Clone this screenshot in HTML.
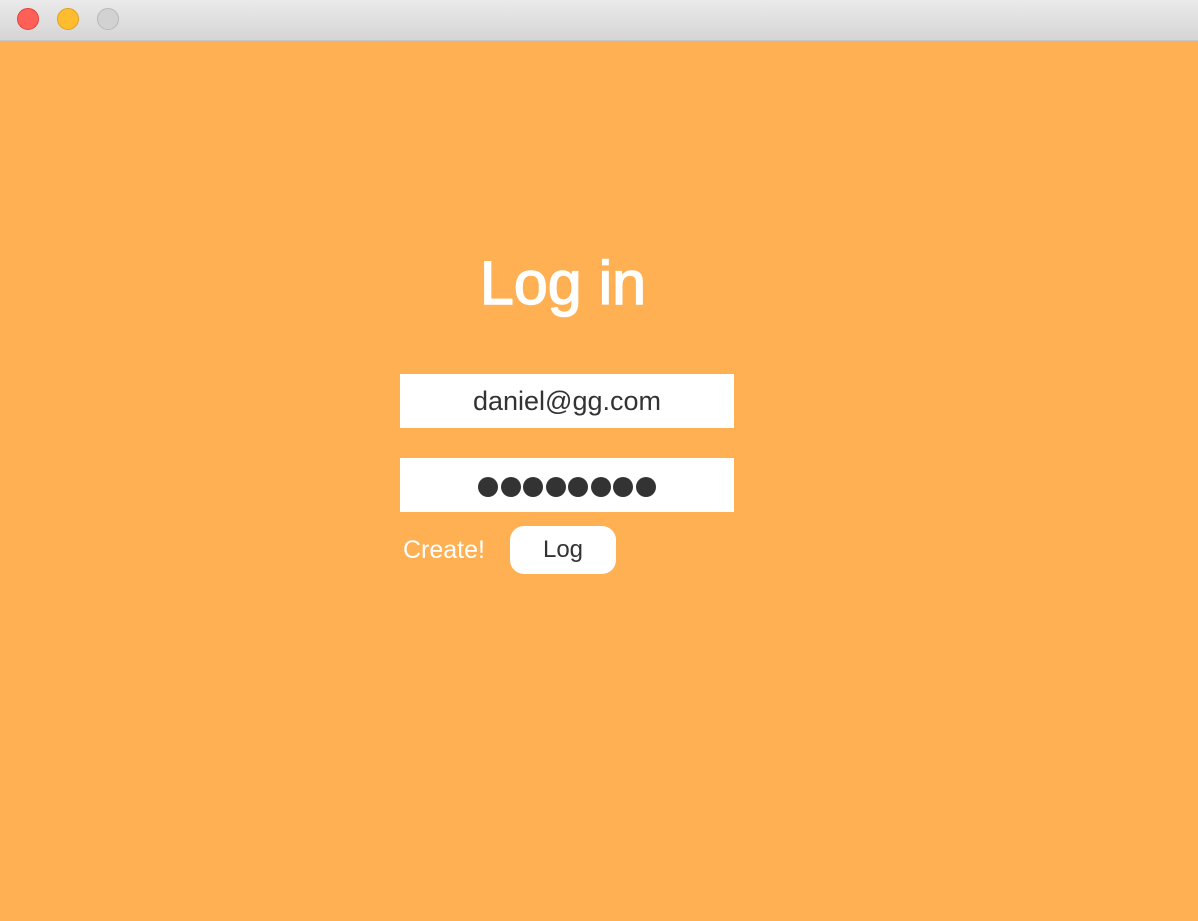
<!DOCTYPE html>
<html><head><style>
body{margin:0;width:1198px;height:921px;background:#ffb053;font-family:"Liberation Sans",sans-serif;position:relative;overflow:hidden}
.bar{position:absolute;left:0;top:0;width:1198px;height:40px;background:linear-gradient(#ebeaeb,#d6d5d6);border-bottom:1px solid #c8c6c8}
.c{position:absolute;top:8px;width:22px;height:22px;border-radius:50%;box-sizing:border-box}
.t{position:absolute;left:380px;width:366px;text-align:center;color:#fff;font-size:61px;top:245px;line-height:76px;-webkit-text-stroke:1.5px #fff}
.in{position:absolute;left:400px;width:334px;height:54px;background:#fff;text-align:center;color:#333;font-size:27px;line-height:54px}
.d{display:inline-block;width:20px;height:20px;border-radius:50%;background:#333;margin:0 1.3px;vertical-align:middle}
.btn{position:absolute;left:510px;top:526px;width:106px;height:48px;background:#fff;border-radius:14px;text-align:center;line-height:48px;font-size:24px;color:#333}
.cr{position:absolute;left:403px;top:536px;color:#fff;font-size:25px;line-height:28px}
</style></head><body>
<div class="bar">
<div class="c" style="left:17px;background:#fe5f57;border:1px solid #e0443e"></div>
<div class="c" style="left:57px;background:#febc2e;border:1px solid #dea123"></div>
<div class="c" style="left:97px;background:#d2d2d2;border:1px solid #b8b8b8"></div>
</div>
<div class="t">Log in</div>
<div class="in" style="top:374px">daniel@gg.com</div>
<div class="in" style="top:458px"><span class="d"></span><span class="d"></span><span class="d"></span><span class="d"></span><span class="d"></span><span class="d"></span><span class="d"></span><span class="d"></span></div>
<div class="cr">Create!</div>
<div class="btn">Log</div>
</body></html>
